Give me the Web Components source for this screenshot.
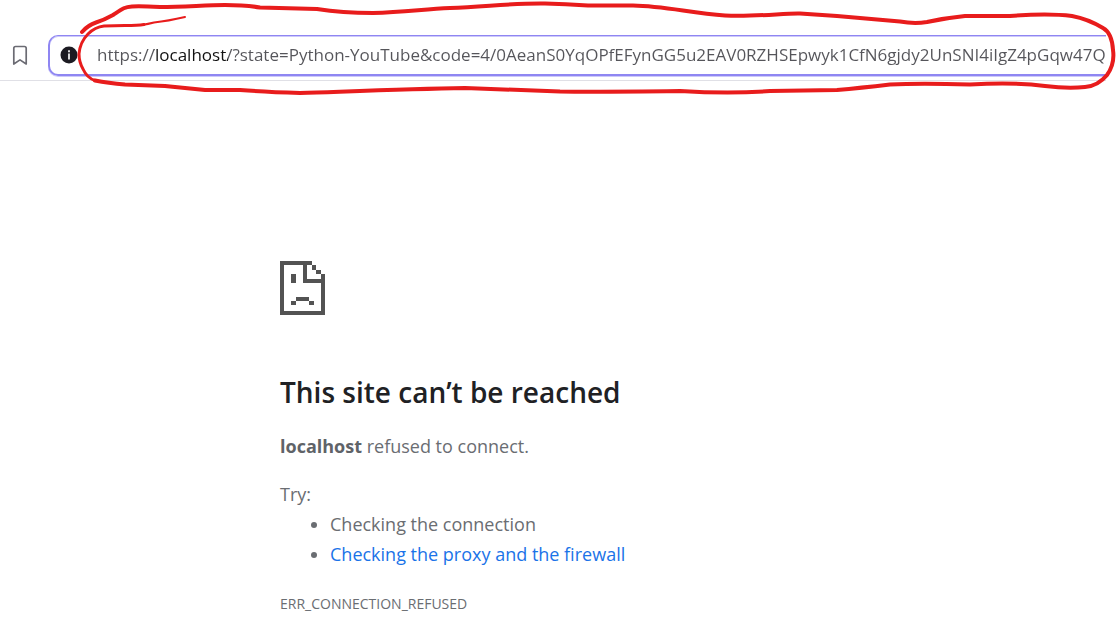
<!DOCTYPE html>
<html lang="en">
<head>
<meta charset="utf-8">
<title>localhost</title>
<style>
  body { margin: 0; background: #fff; font-family: "Open Sans", "Noto Sans", sans-serif; }
</style>
</head>
<body>
<browser-page></browser-page>
<script>
const define = (name, html) => customElements.define(name, class extends HTMLElement {
  constructor() {
    super();
    this.attachShadow({ mode: 'open' }).innerHTML = html;
  }
});

define('bookmark-button', `
  <style>
    :host { display: block; }
    button { display: block; padding: 0; border: 0; background: none; }
    svg { display: block; }
  </style>
  <button type="button" aria-label="Bookmark this page">
    <svg width="16" height="22" viewBox="0 0 16 22" fill="none" stroke="#6b6b73" stroke-width="1.7" stroke-linejoin="round">
      <path d="M3.6 1.500H12.4Q14.2 1.500 14.2 3.3V19L8 14.900L1.8 19V3.3Q1.8 1.500 3.6 1.500Z"/>
    </svg>
  </button>`);

define('address-field', `
  <style>
    :host {
      display: flex; align-items: center; gap: 19px; box-sizing: border-box; height: 41px; padding-left: 10px;
      border: solid #8f86f2; border-width: 1px 0 2px 2px; border-radius: 10px 0 0 10px;
      box-shadow: inset 0 1px #cdc9fa, 0 1px #cdc9fa;
    }
    button { flex: none; padding: 0; border: 0; background: none; }
    svg { display: block; }
    input {
      flex: 1; min-width: 0; height: 32px; padding: 0; border: 0; outline: 0;
      font: 400 17px/32px "Open Sans", "Noto Sans", sans-serif;
      color: transparent;
      background: linear-gradient(90deg, #55555a 57px, #111 57px 131px, #55555a 131px);
      -webkit-background-clip: text; background-clip: text;
    }
  </style>
  <button type="button" aria-label="Site information">
    <svg width="18" height="18" viewBox="0 0 18 18">
      <circle cx="9" cy="9" r="8.5" fill="#1c1b22"/>
      <path d="M8 4.2h2v2H8zM8 7.4h2v6H8z" fill="#d8d8da"/>
    </svg>
  </button>
  <input type="text" aria-label="Address" spellcheck="false" value="https://localhost/?state=Python-YouTube&amp;code=4/0AeanS0YqOPfEFynGG5u2EAV0RZHSEpwyk1CfN6gjdy2UnSNI4iIgZ4pGqw47QlK">`);

define('browser-toolbar', `
  <style>
    :host {
      display: flex; align-items: center; gap: 20px; box-sizing: border-box;
      margin-right: 11px; padding: 35px 0 4px 12px; border-bottom: 1px solid #e0e0e6;
    }
    address-field { flex: 1; min-width: 0; }
  </style>
  <bookmark-button></bookmark-button>
  <address-field></address-field>`);

define('ink-outline', `
  <style>
    :host { display: block; position: absolute; inset: 0 0 auto 0; height: 100px; pointer-events: none; }
    svg { display: block; width: 100%; height: 100%; }
  </style>
  <svg viewBox="0 0 1117 100" preserveAspectRatio="none" fill="none" stroke="#e81c1c" stroke-width="4" stroke-linecap="round" stroke-linejoin="round" aria-hidden="true">
    <path d="M82 32Q88 25 96 22.500T113 15C122 9 124 7 132 6.500Q140 6 160 7C185 7 205 5 225 5Q245 5 260 7.500L317 9Q342 13 373 13C405 12 425 9 450 8C485 7 510 3 545 3.500Q565 4 588 5.500H633C665 6 690 13 725 15.500C755 17 785 13 800 13.500L837 16L900 21.500Q914 24 927 22Q945 18 965 16H1010Q1048 13 1072 16Q1088 19 1103 28Q1112 33 1113 50Q1115 64 1107 75Q1098 86 1085 87Q1068 89 1045 86Q1015 82 970 84.500Q920 83 890 84.500Q860 88 837 90L770 91Q730 94 680 91Q600 92 560 91.500L465 88C410 89 360 91 300 93Q265 92 240 90H205L165 86L125 84.500Q108 83 95 80.500"/>
    <path stroke-width="3" d="M95 80.500Q87 78 83 69Q79 62 79 54Q80 42 88 34Q95 27 104 26L125 25.500Q138 25.500 144 24.500"/>
    <path stroke-width="2" d="M142 25Q148 24 154 22.500Q168 21 185 17"/>
  </svg>`);

define('sad-document', `
  <style>
    :host { display: block; }
    svg { display: block; }
  </style>
  <svg width="45" height="54" viewBox="0 0 45 54" fill="#535353" shape-rendering="crispEdges" role="img" aria-label="Page unavailable">
    <path d="M0 0H32V4H27V18H45V54H0ZM4 4V50H41V22H23V4Z" fill-rule="evenodd"/>
    <path d="M32 4h4v5h-4zM36 9h5v4h-5zM41 13h4v6h-4zM11 13h5v9h-5zM16 36h13v4H16zM11 40h5v4h-5zM29 40h5v4h-5z"/>
  </svg>`);

define('error-message', `
  <style>
    :host { display: block; box-sizing: border-box; max-width: 557px; margin: 180px auto 0; color: #6a6d72; font-size: 18px; line-height: 30px; font-weight: 400; }
    h1 { margin: 58px 0 20px; color: #202124; font-size: 28px; line-height: 38px; font-weight: 600; }
    p { margin: 0; }
    strong { color: #5f6368; font-weight: 700; }
    .try { margin-top: 18px; }
    ul { margin: 0; padding-left: 50px; }
    a { color: #1a73e8; text-decoration: none; }
    .code { margin-top: 20px; font-size: 14px; }
  </style>
  <sad-document></sad-document>
  <h1>This site can’t be reached</h1>
  <p><strong>localhost</strong> refused to connect.</p>
  <p class="try">Try:</p>
  <ul>
    <li>Checking the connection</li>
    <li><a href="#proxy">Checking the proxy and the firewall</a></li>
  </ul>
  <p class="code">ERR_CONNECTION_REFUSED</p>`);

define('browser-page', `
  <style>
    :host { display: block; position: relative; }
  </style>
  <browser-toolbar></browser-toolbar>
  <error-message></error-message>
  <ink-outline></ink-outline>`);
</script>
</body>
</html>
